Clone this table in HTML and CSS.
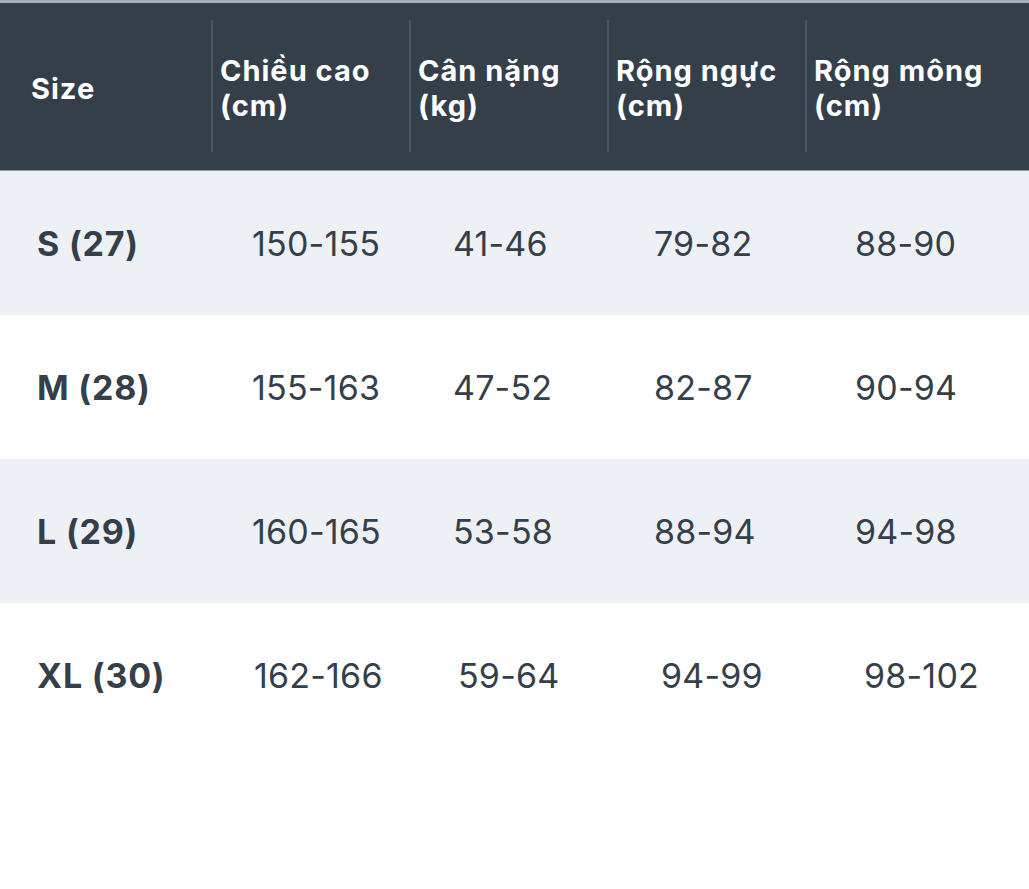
FILE: index.html
```html
<!DOCTYPE html>
<html lang="vi">
<head>
<meta charset="utf-8">
<title>Bảng size</title>
<link rel="stylesheet" href="styles.css">
</head>
<body>
<div class="table">
  <div class="row head">
    <div class="hcell first">Size</div>
    <div class="hcell">Chiều cao<br>(cm)</div>
    <div class="hcell">Cân nặng<br>(kg)</div>
    <div class="hcell">Rộng ngực<br>(cm)</div>
    <div class="hcell">Rộng mông<br>(cm)</div>
  </div>
  <div class="row data alt">
    <div class="cell size">S (27)</div>
    <div class="cell">150-155</div>
    <div class="cell">41-46</div>
    <div class="cell">79-82</div>
    <div class="cell">88-90</div>
  </div>
  <div class="row data">
    <div class="cell size">M (28)</div>
    <div class="cell">155-163</div>
    <div class="cell">47-52</div>
    <div class="cell">82-87</div>
    <div class="cell">90-94</div>
  </div>
  <div class="row data alt">
    <div class="cell size">L (29)</div>
    <div class="cell">160-165</div>
    <div class="cell">53-58</div>
    <div class="cell">88-94</div>
    <div class="cell">94-98</div>
  </div>
  <div class="row data last">
    <div class="cell size">XL (30)</div>
    <div class="cell">162-166</div>
    <div class="cell">59-64</div>
    <div class="cell">94-99</div>
    <div class="cell">98-102</div>
  </div>
</div>
</body>
</html>
```

FILE: styles.css
```css
html, body {
  margin: 0;
  padding: 0;
  background: #ffffff;
}

body {
  font-family: "Inter", "Liberation Sans", sans-serif;
  color: #343f4a;
  width: 1029px;
  height: 889px;
  overflow: hidden;
}

.table {
  border-top: 3px solid #a7afb7;
}

.row {
  display: grid;
  height: 144px;
  align-items: center;
}

.row.head {
  grid-template-columns: 211px 198px 198px 198px 1fr;
  height: 167px;
  background: #343f4a;
  border-bottom: 1px solid #8f99a3;
  align-items: stretch;
}

.row.data {
  grid-template-columns: 211px 201px 201px 201px 1fr;
}

.row.data.last {
  grid-template-columns: 213px 204px 203px 203px 1fr;
}

.row.alt {
  background: #edf1f5;
}

.hcell {
  color: #ffffff;
  font-weight: 700;
  font-size: 29px;
  letter-spacing: 1px;
  line-height: 35px;
  margin: 17px 0 18px;
  padding: 4px 0 0 7px;
  border-left: 2px solid #4b5661;
  display: flex;
  align-items: center;
  white-space: nowrap;
}

.hcell.first {
  border-left: none;
  padding-left: 31px;
}

.cell {
  font-size: 34px;
  font-weight: 400;
  letter-spacing: 0.2px;
  padding-left: 41px;
  white-space: nowrap;
}

.cell.size {
  padding-left: 37px;
  font-weight: 700;
  letter-spacing: 0.8px;
}
```
